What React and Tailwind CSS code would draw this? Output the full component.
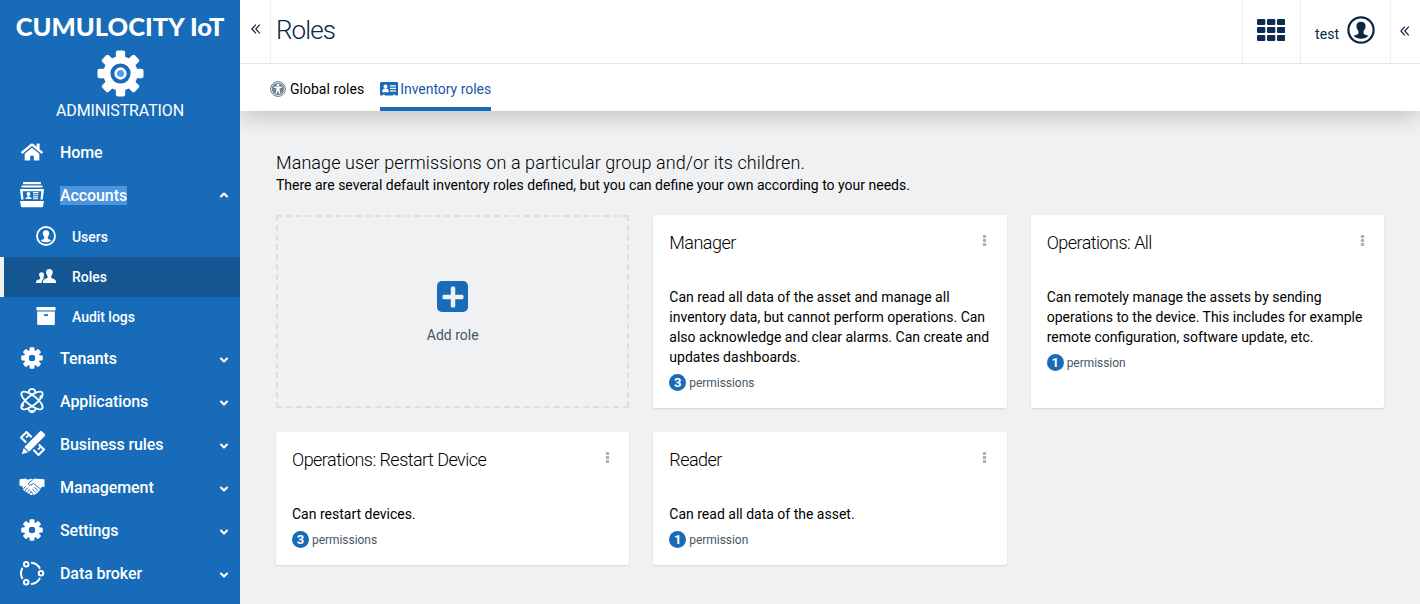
import React from "react";
import { FaHome, FaPlus } from "react-icons/fa";
import { ChevronDown, ChevronUp } from "lucide-react";

const TEETH = [0, 45, 90, 135, 180, 225, 270, 315];

function Gear({ size, toothWidth = 9, hole = 8, children }) {
  return (
    <svg width={size} height={size} viewBox="-24 -24 48 48" fill="currentColor">
      {TEETH.map((a) => (
        <rect key={a} x={-toothWidth / 2} y="-23.5" width={toothWidth} height="12" rx="2" transform={`rotate(${a})`} />
      ))}
      <circle r={(17.5 + hole) / 2} fill="none" stroke="currentColor" strokeWidth={17.5 - hole} />
      {children}
    </svg>
  );
}

function Cabinet() {
  return (
    <svg width="26" height="26" viewBox="0 0 26 26" fill="currentColor">
      <rect x="4" y="0" width="18" height="2.200" rx=".5" />
      <rect x="2.500" y="3.400" width="21" height="2.200" rx=".5" />
      <path d="M1 7h24l-1.200 10.500h-2.300l.8-8.300H3.700l.8 8.300H2.200z" />
      <circle cx="9.500" cy="11.800" r="1.900" />
      <path d="M8.600 13h1.800v2l2 .8V17H6.600v-1.200l2-.8z" />
      <path d="M14 10h5.500v1.200H14zM14 12.200h5.300v1.100H14zM14 14.300h5.100v1.100H14zM14 16.300h5v.9h-5z" />
      <path d="M1 19h24l-1 5.400q-.1.800-1 .8H3q-.9 0-1-.8z" />
    </svg>
  );
}

function UserCircle({ size, ring = 1.7 }) {
  return (
    <svg width={size} height={size} viewBox="0 0 24 24">
      <circle cx="12" cy="12" r="10.800" fill="none" stroke="currentColor" strokeWidth={ring} />
      <path
        fill="currentColor"
        d="M12 5c-2.600 0-4.100 1.500-3.900 4 .1 1.400.7 2.700 1.700 4v1.900c-.2.900-2.600 1.200-4.100 2.100 1.300 1.600 3.700 2.600 6.300 2.600s5-1 6.300-2.600c-1.500-.9-3.900-1.200-4.100-2.100V13c1-1.300 1.600-2.600 1.700-4 .2-2.500-1.300-4-3.900-4z"
      />
    </svg>
  );
}

function People() {
  return (
    <svg width="20" height="14" viewBox="0 0 20 14" fill="currentColor">
      <path d="M13.300 0c-2.200 0-3.300 1.400-3.200 3.300.1 1.600.6 2.700 1.500 3.700v1.600c-.3 1-4.300 1.400-4.600 3.900V14h13v-1.500c-.3-2.500-4.500-2.900-4.800-3.900V7c.9-1 1.400-2.100 1.500-3.700C16.800 1.400 15.500 0 13.300 0z" />
      <path d="M5.500 3.200c-1.700 0-2.500 1-2.400 2.500.1 1.200.4 2 1.100 2.800v1.200C4 10.500.2 10.700 0 12.700V14h5.800v-1.500c.2-1.700 1.500-2.600 2.700-3.300l-1.300-.5v-.4C7.900 7.500 8 6.800 8 5.700c.1-1.600-.8-2.500-2.500-2.500z" />
    </svg>
  );
}

function Archive() {
  return (
    <svg width="20" height="18" viewBox="0 0 20 18" fill="currentColor">
      <rect x=".5" width="19" height="3.600" rx=".6" />
      <path fillRule="evenodd" d="M1.200 4.600h17.600V17q0 .900-.9.900H2.100q-.9 0-.9-.9zM8 7.300v1.600h4V7.300z" />
    </svg>
  );
}

function Atom() {
  return (
    <svg width="26" height="26" viewBox="-13 -12.500 26 26" fill="none" stroke="currentColor" strokeWidth="1.800">
      <ellipse rx="13" ry="4.800" transform="rotate(38)" />
      <ellipse rx="13" ry="4.800" transform="rotate(-38)" />
      <path d="M-3.500-8.500C-2.200-12.600 2.200-12.600 3.500-8.500M-3.500 8.500C-2.200 12.600 2.200 12.600 3.500 8.500" />
      <g fill="currentColor" stroke="none">
        <circle cx="9" cy="-3.500" r="1.700" />
        <circle cx="-9.500" cy="4.500" r="1.700" />
        <circle cy="11" r="1.700" />
      </g>
    </svg>
  );
}

function PencilRuler() {
  return (
    <svg width="25" height="25" viewBox="0 0 26 26">
      <g transform="rotate(45 13 13)" fill="none" stroke="currentColor" strokeWidth="2.200">
        <path d="M7.700 9H.2v8h7.500M18.300 9h7.500v8h-7.500" />
        <path d="M4 9v4.500M21.500 9v4.500" strokeWidth="1.800" />
      </g>
      <g transform="rotate(45 13 13)" fill="currentColor">
        <path d="M9.500-1.700q0-1.300 1.300-1.300h4.400q1.300 0 1.300 1.300v23.200h-7zM9.800 22.700h6.400l-3.200 6z" />
      </g>
    </svg>
  );
}

function Handshake() {
  return (
    <svg width="26" height="18" viewBox="0 0 26 18">
      <path
        fill="currentColor"
        d="M.5 1.200 6.500.5l2.300 1.200L12 .8l2 .5 2.500-.8L20 1l5.500.2v7.500l-3 .3-1.200 2.500-1.300 1.700-1.500 1.500-1.600 1.300-1.700.8-1.700-.2-1.300.7-1.700-1.200-1.500-.5-1.300-1.300L6 13.200l-2-1.700L3.500 8.500l-3-1z"
      />
      <path
        fill="none"
        stroke="#176bb8"
        strokeWidth=".9"
        strokeLinecap="round"
        strokeLinejoin="round"
        d="M13.500 2 9.200 5.500Q9.500 8 12 7l2.500-1.500L21.500 11M15.500 9.500l3.500 3M13.500 11.500l3 2.700M11.500 13.300l2.500 2.200M4.500 10.500l2-2M6.200 12.500l2.800-2.700M8.300 14l2.400-2.500M10.500 15.500l1.700-1.700"
      />
    </svg>
  );
}

function Broker() {
  return (
    <svg width="26" height="26" viewBox="0 0 26 26" fill="none" stroke="currentColor" strokeWidth="2">
      <circle cx="7.200" cy="4.300" r="2.300" />
      <circle cx="7.200" cy="22.300" r="2.300" />
      <circle cx="22" cy="13.300" r="2.300" />
      <path d="M3.500 7.700Q.400 13.300 3.500 18.900M12 2.700q6.200.3 9 6M12 24q6.200-.3 9-6" />
    </svg>
  );
}

function GlobalIcon() {
  return (
    <svg width="16" height="16" viewBox="0 0 16 16">
      <circle cx="8" cy="8" r="7.400" fill="none" stroke="#627487" strokeWidth="1" />
      <circle cx="8" cy="8" r="6.200" fill="#718496" />
      <circle cx="8" cy="4" r="1.300" fill="#fff" />
      <path d="M3.800 5.700 7 5.500h2l3.200.2v1.100l-2.700.4.2 2.300.8 3.300-1.100.3L8.200 9.800h-.4l-1.200 3.300-1.100-.3.8-3.300.2-2.300-2.700-.4z" fill="#fff" />
    </svg>
  );
}

function IdCard() {
  return (
    <svg width="18" height="14" viewBox="0 0 18 14">
      <path d="M1 0h16q1 0 1 1v11.500q0 1-1 1h-1.500a1.300 1.300 0 0 0-2.500 0H5a1.300 1.300 0 0 0-2.500 0H1q-1 0-1-1V1q0-1 1-1z" fill="#176bb8" />
      <circle cx="5.500" cy="4.400" r="2" fill="#fff" />
      <path d="M2.200 10.200q0-3.300 2-3.700h2.600q2 .4 2 3.700z" fill="#fff" />
      <path d="M10 3.200h6v1.200h-6zM10 5.700h6v1.200h-6zM10 8.200h6v1.300h-6z" fill="#fff" />
    </svg>
  );
}

function DoubleLeft() {
  return (
    <svg width="10" height="10" viewBox="0 0 10 10" fill="none" stroke="#0b2545" strokeWidth="1.200">
      <path d="M4.900.7.900 5l4 4.300M8.800.7l-4 4.300 4 4.300" />
    </svg>
  );
}

function AppGrid() {
  return (
    <svg width="28" height="22" viewBox="0 0 28 22" fill="#0e2c52">
      {[0, 8, 16].map((y) =>
        [0, 10, 20].map((x) => <rect key={`${x}-${y}`} x={x} y={y} width="8.300" height="6" rx="1.200" />)
      )}
    </svg>
  );
}

function NavItem({ icon, label, open, chevron = true, selected }) {
  return (
    <div className="flex h-[43px] items-center pr-2.5">
      <div className="flex w-16 shrink-0 justify-center pb-0.5">{icon}</div>
      <div className="-ml-1 flex-1 text-[16px] leading-[19px] font-medium tracking-[-0.09px]">
        <span className={selected ? "bg-[#4b94de]" : ""}>{label}</span>
      </div>
      {chevron && (open ? <ChevronUp size={12} strokeWidth={4.2} className="mb-px" /> : <ChevronDown size={12} strokeWidth={4.2} className="mt-[3px]" />)}
    </div>
  );
}

function SubItem({ icon, label, active }) {
  return (
    <div className={active ? "flex h-10 items-center border-l-4 border-[#eff1f3] bg-[#155793]" : "flex h-10 items-center border-l-4 border-transparent"}>
      <div className="ml-8 flex w-5 justify-center pb-0.5">{icon}</div>
      <div className="ml-4 text-[14px] leading-5 font-medium tracking-[-0.04px]">{label}</div>
    </div>
  );
}

function RoleCard({ title, text, count }) {
  return (
    <div className="rounded-[2px] bg-white px-4 shadow-[0_1px_2px_rgba(0,0,0,0.12)]">
      <div className="flex h-14 items-center justify-between">
        <h3 className="text-[18px] leading-6 font-light tracking-[-0.54px] text-black">{title}</h3>
        <svg width="5" height="11" viewBox="0 0 5 11" fill="#a5b1bb" className="mr-[3.500px] mb-1.5">
          <rect x=".8" width="3.400" height="2.900" rx=".9" />
          <rect x=".8" y="4" width="3.400" height="2.900" rx=".9" />
          <rect x=".8" y="8" width="3.400" height="2.900" rx=".9" />
        </svg>
      </div>
      <div className="pt-4">
        {text.map((line) => (
          <p key={line} className="text-[14px] leading-5 whitespace-nowrap text-black">{line}</p>
        ))}
      </div>
      <div className="flex h-8 items-center">
        <span className="mb-px flex size-[17px] items-center justify-center rounded-full bg-[#176bb8] text-[13px] leading-none font-bold text-white">{count}</span>
        <span className="ml-[3px] text-[12px] tracking-[-0.05px] text-[#475866]">{count === 1 ? "permission" : "permissions"}</span>
      </div>
    </div>
  );
}

export default function App() {
  return (
    <div className="flex h-[604px] w-[1420px] overflow-hidden bg-[#eff1f3] font-['Roboto',sans-serif]">
      <aside className="flex w-60 shrink-0 flex-col bg-[#176bb8] text-white">
        <div className="flex h-[131px] flex-col items-center">
          <div className="mt-2.5 text-[25.500px] leading-8 font-black whitespace-nowrap font-['Lato',sans-serif]">CUMULOCITY IoT</div>
          <div className="mt-2">
            <Gear size={47} toothWidth={9.5} hole={10.3}>
              <circle r="5" fill="#4fa0e8" stroke="#fff" strokeWidth="2.600" />
            </Gear>
          </div>
          <div className="mt-1 text-[16px] leading-5 tracking-[-0.12px]">ADMINISTRATION</div>
        </div>
        <nav>
          <div className="border-b border-[#1666b0]">
            <div className="-mb-px"><NavItem icon={<FaHome size={22} />} label="Home" chevron={false} /></div>
          </div>
          <NavItem icon={<Cabinet />} label="Accounts" open selected />
          <SubItem icon={<UserCircle size={20} ring={2.2} />} label="Users" />
          <SubItem icon={<People />} label="Roles" active />
          <SubItem icon={<Archive />} label="Audit logs" />
          <div className="-mt-px border-t border-[#1666b0]">
            <NavItem icon={<Gear size={22} toothWidth={10.5} hole={7} />} label="Tenants" />
          </div>
          <NavItem icon={<Atom />} label="Applications" />
          <NavItem icon={<PencilRuler />} label="Business rules" />
          <NavItem icon={<Handshake />} label="Management" />
          <NavItem icon={<Gear size={22} toothWidth={10.5} hole={7} />} label="Settings" />
          <NavItem icon={<Broker />} label="Data broker" />
        </nav>
      </aside>
      <div className="flex flex-1 flex-col overflow-hidden">
        <header className="z-10 flex h-16 shrink-0 border-b border-[#e4e6e8] bg-white text-[#0b2545]">
          <div className="flex w-[31px] items-center justify-center border-r border-[#eceef0] pb-1.5 pl-px"><DoubleLeft /></div>
          <h1 className="flex-1 pt-3 pl-[5px] text-[26px] leading-9 font-light tracking-[-0.9px]">Roles</h1>
          <div className="flex w-[58px] items-center justify-center border-l border-[#eceef0] pr-px pb-1"><AppGrid /></div>
          <div className="flex w-[90px] items-center border-l border-[#eceef0] pl-3.5">
            <span className="pt-1.5 text-[14px] tracking-[0.1px]">test</span>
            <span className="mb-[3px] ml-2"><UserCircle size={28} ring={1.9} /></span>
          </div>
          <div className="flex w-[30px] items-center justify-center border-l border-[#eceef0] pr-px pb-px"><DoubleLeft /></div>
        </header>
        <div className="flex h-[47px] shrink-0 bg-white pl-[30px] text-[14px] shadow-[0_4px_24px_rgba(0,0,0,0.22)]">
          <div className="flex items-center pt-[3px] text-black">
            <GlobalIcon />
            <span className="ml-1 tracking-[0.02px]">Global roles</span>
          </div>
          <div className="ml-4 flex items-center border-b-4 border-[#176bb8] pt-[7px] text-[#1657ab]">
            <IdCard />
            <span className="ml-0.5 tracking-[-0.03px]">Inventory roles</span>
          </div>
        </div>
        <main className="flex-1 px-9 pt-10">
          <h2 className="text-[18px] leading-6 font-light tracking-[0.08px] text-black">Manage user permissions on a particular group and/or its children.</h2>
          <p className="-mt-px text-[14px] leading-[22px] text-black">There are several default inventory roles defined, but you can define your own according to your needs.</p>
          <div className="mt-[19px] grid grid-cols-3 grid-rows-[193px_133px] gap-6">
            <div className="flex flex-col items-center border-2 border-dashed border-[#dcdee0] pt-16">
              <span className="flex size-[31px] items-center justify-center rounded-[5px] bg-[#176bb8] text-[#eff1f3]"><FaPlus size={24} /></span>
              <span className="mt-[13px] text-[14px] leading-5 text-[#475866]">Add role</span>
            </div>
            <RoleCard
              title="Manager"
              text={["Can read all data of the asset and manage all", "inventory data, but cannot perform operations. Can", "also acknowledge and clear alarms. Can create and", "updates dashboards."]}
              count={3}
            />
            <RoleCard
              title="Operations: All"
              text={["Can remotely manage the assets by sending", "operations to the device. This includes for example", "remote configuration, software update, etc."]}
              count={1}
            />
            <RoleCard title="Operations: Restart Device" text={["Can restart devices."]} count={3} />
            <RoleCard title="Reader" text={["Can read all data of the asset."]} count={1} />
          </div>
        </main>
      </div>
    </div>
  );
}
